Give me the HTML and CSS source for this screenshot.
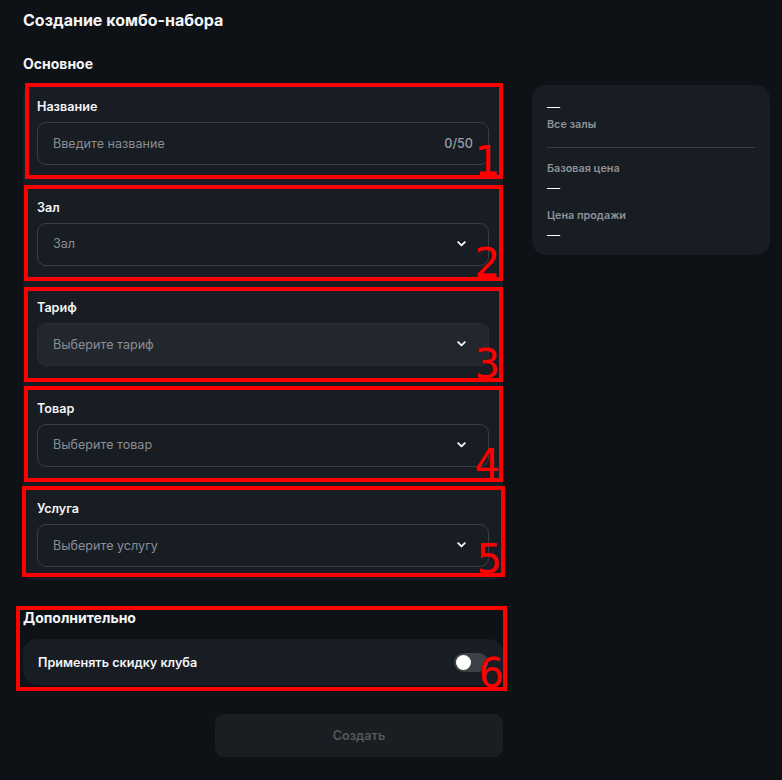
FILE: index.html
```html
<!DOCTYPE html>
<html lang="ru">
<head>
<meta charset="utf-8">
<title>Создание комбо-набора</title>
<link rel="stylesheet" href="styles.css">
</head>
<body>
<div class="page">
  <h1 class="title">Создание комбо-набора</h1>
  <div class="layout">
    <h2 class="section-title main-title">Основное</h2>

    <div class="card form-card">
      <div class="field">
        <div class="field-label">Название</div>
        <div class="input">
          <span class="placeholder">Введите название</span>
          <span class="counter">0/50</span>
        </div>
      </div>
      <div class="field">
        <div class="field-label">Зал</div>
        <div class="input select">
          <span class="placeholder">Зал</span>
          <svg class="chevron" width="9" height="6" viewBox="0 0 9 6"><polyline points="1.2,1.2 4.5,4.3 7.8,1.2" fill="none" stroke="#ffffff" stroke-width="1.8" stroke-linecap="round" stroke-linejoin="round"/></svg>
        </div>
      </div>
      <div class="field">
        <div class="field-label">Тариф</div>
        <div class="input select disabled">
          <span class="placeholder">Выберите тариф</span>
          <svg class="chevron" width="9" height="6" viewBox="0 0 9 6"><polyline points="1.2,1.2 4.5,4.3 7.8,1.2" fill="none" stroke="#ffffff" stroke-width="1.8" stroke-linecap="round" stroke-linejoin="round"/></svg>
        </div>
      </div>
      <div class="field">
        <div class="field-label">Товар</div>
        <div class="input select">
          <span class="placeholder">Выберите товар</span>
          <svg class="chevron" width="9" height="6" viewBox="0 0 9 6"><polyline points="1.2,1.2 4.5,4.3 7.8,1.2" fill="none" stroke="#ffffff" stroke-width="1.8" stroke-linecap="round" stroke-linejoin="round"/></svg>
        </div>
      </div>
      <div class="field">
        <div class="field-label">Услуга</div>
        <div class="input select">
          <span class="placeholder">Выберите услугу</span>
          <svg class="chevron" width="9" height="6" viewBox="0 0 9 6"><polyline points="1.2,1.2 4.5,4.3 7.8,1.2" fill="none" stroke="#ffffff" stroke-width="1.8" stroke-linecap="round" stroke-linejoin="round"/></svg>
        </div>
      </div>
    </div>

    <aside class="card summary">
      <div class="sum-value">—</div>
      <div class="sum-label first-label">Все залы</div>
      <div class="divider"></div>
      <div class="sum-label">Базовая цена</div>
      <div class="sum-value">—</div>
      <div class="sum-label later-label">Цена продажи</div>
      <div class="sum-value">—</div>
    </aside>

    <div class="extra">
      <h2 class="section-title">Дополнительно</h2>
      <div class="card toggle-card">
        <span class="toggle-text">Применять скидку клуба</span>
        <span class="toggle"><span class="knob"></span></span>
      </div>
      <div class="actions">
        <button class="btn-create" type="button">Создать</button>
      </div>
    </div>
  </div>

  <div class="mark mark-1"><span class="mark-num">1</span></div>
  <div class="mark mark-2"><span class="mark-num">2</span></div>
  <div class="mark mark-3"><span class="mark-num">3</span></div>
  <div class="mark mark-4"><span class="mark-num">4</span></div>
  <div class="mark mark-5"><span class="mark-num">5</span></div>
  <div class="mark mark-6"><span class="mark-num">6</span></div>
</div>
</body>
</html>
```
FILE: styles.css
```css
* { box-sizing: border-box; }
html, body {
  margin: 0;
  padding: 0;
  background: #0e1116;
}
body {
  font-family: Inter, "Noto Sans", sans-serif;
  color: #f4f5f6;
  width: 782px;
  height: 780px;
  overflow: hidden;
}
.page {
  position: relative;
  padding: 10px 12px 0 23px;
  height: 780px;
}
.title {
  margin: 0;
  font-size: 16px;
  line-height: 20px;
  font-weight: 700;
}
.layout {
  display: grid;
  grid-template-columns: 480px 238px;
  column-gap: 29px;
  margin-top: 25px;
}
.section-title {
  margin: 0 0 12px;
  font-size: 14px;
  line-height: 18px;
  font-weight: 700;
}
.main-title { grid-column: 1; grid-row: 1; }
.card {
  background: #181c23;
  border-radius: 13px;
}
.form-card {
  grid-column: 1;
  grid-row: 2;
  padding: 14px 14px 13px;
  display: flex;
  flex-direction: column;
  gap: 34.6px;
}
.field { display: flex; flex-direction: column; }
.field-label {
  font-size: 12.6px;
  line-height: 16px;
  font-weight: 600;
  margin-bottom: 7px;
}
.input {
  height: 43px;
  border: 1px solid #3a3d44;
  border-radius: 9px;
  padding: 0 15px 1px;
  display: flex;
  align-items: center;
  justify-content: space-between;
  font-size: 12.6px;
}
.input.disabled {
  background: #22262d;
  border-color: #292d34;
}
.select { padding-right: 22px; }
.placeholder { color: #8a8d93; }
.counter { color: #9c9ea3; font-weight: 500; }
.chevron { display: block; }

.summary {
  grid-column: 2;
  grid-row: 2;
  align-self: start;
  padding: 14px 15px 12px;
  border-radius: 14px;
}
.sum-value {
  font-size: 13px;
  line-height: 16px;
  color: #ffffff;
}
.sum-label {
  font-size: 10.8px;
  line-height: 14px;
  font-weight: 600;
  color: #8e9196;
  margin-top: 14px;
}
.sum-label.first-label { margin-top: 3px; }
.sum-label.later-label { margin-top: 13px; }
.sum-label + .sum-value { margin-top: 4px; }
.divider {
  height: 1px;
  background: #3b3e45;
  margin-top: 15px;
}

.extra {
  grid-column: 1;
  grid-row: 3;
  margin-top: 29px;
}
.toggle-card {
  height: 46px;
  padding: 0 15px;
  display: flex;
  align-items: center;
  justify-content: space-between;
  border-radius: 14px;
}
.toggle-text {
  font-size: 12.6px;
  font-weight: 600;
}
.toggle {
  width: 34px;
  height: 19px;
  border-radius: 10px;
  background: #3d4046;
  display: flex;
  align-items: center;
  padding-left: 2px;
}
.knob {
  width: 15px;
  height: 15px;
  border-radius: 50%;
  background: #ffffff;
}
.actions {
  display: flex;
  justify-content: flex-end;
  margin-top: 29px;
}
.btn-create {
  width: 288px;
  height: 43px;
  border: none;
  border-radius: 9px;
  background: #1a1d22;
  color: #55585d;
  font-family: Inter, "Noto Sans", sans-serif;
  font-size: 12.6px;
  font-weight: 600;
}

/* red annotation overlays */
.mark {
  position: absolute;
  border: 4px solid #ff0000;
}
.mark-num {
  position: absolute;
  right: -1px;
  bottom: -6px;
  font-family: "DejaVu Sans", sans-serif;
  font-size: 40px;
  line-height: 40px;
  color: #ff0000;
}
.mark-1 { left: 25px; top: 83px; width: 478px; height: 96px; }
.mark-2 { left: 24px; top: 185px; width: 479px; height: 96px; }
.mark-3 { left: 24px; top: 287px; width: 479px; height: 95px; }
.mark-4 { left: 24px; top: 386px; width: 479px; height: 96px; }
.mark-5 { left: 22px; top: 486px; width: 483px; height: 91px; }
.mark-6 { left: 16px; top: 606px; width: 491px; height: 85px; }
```
